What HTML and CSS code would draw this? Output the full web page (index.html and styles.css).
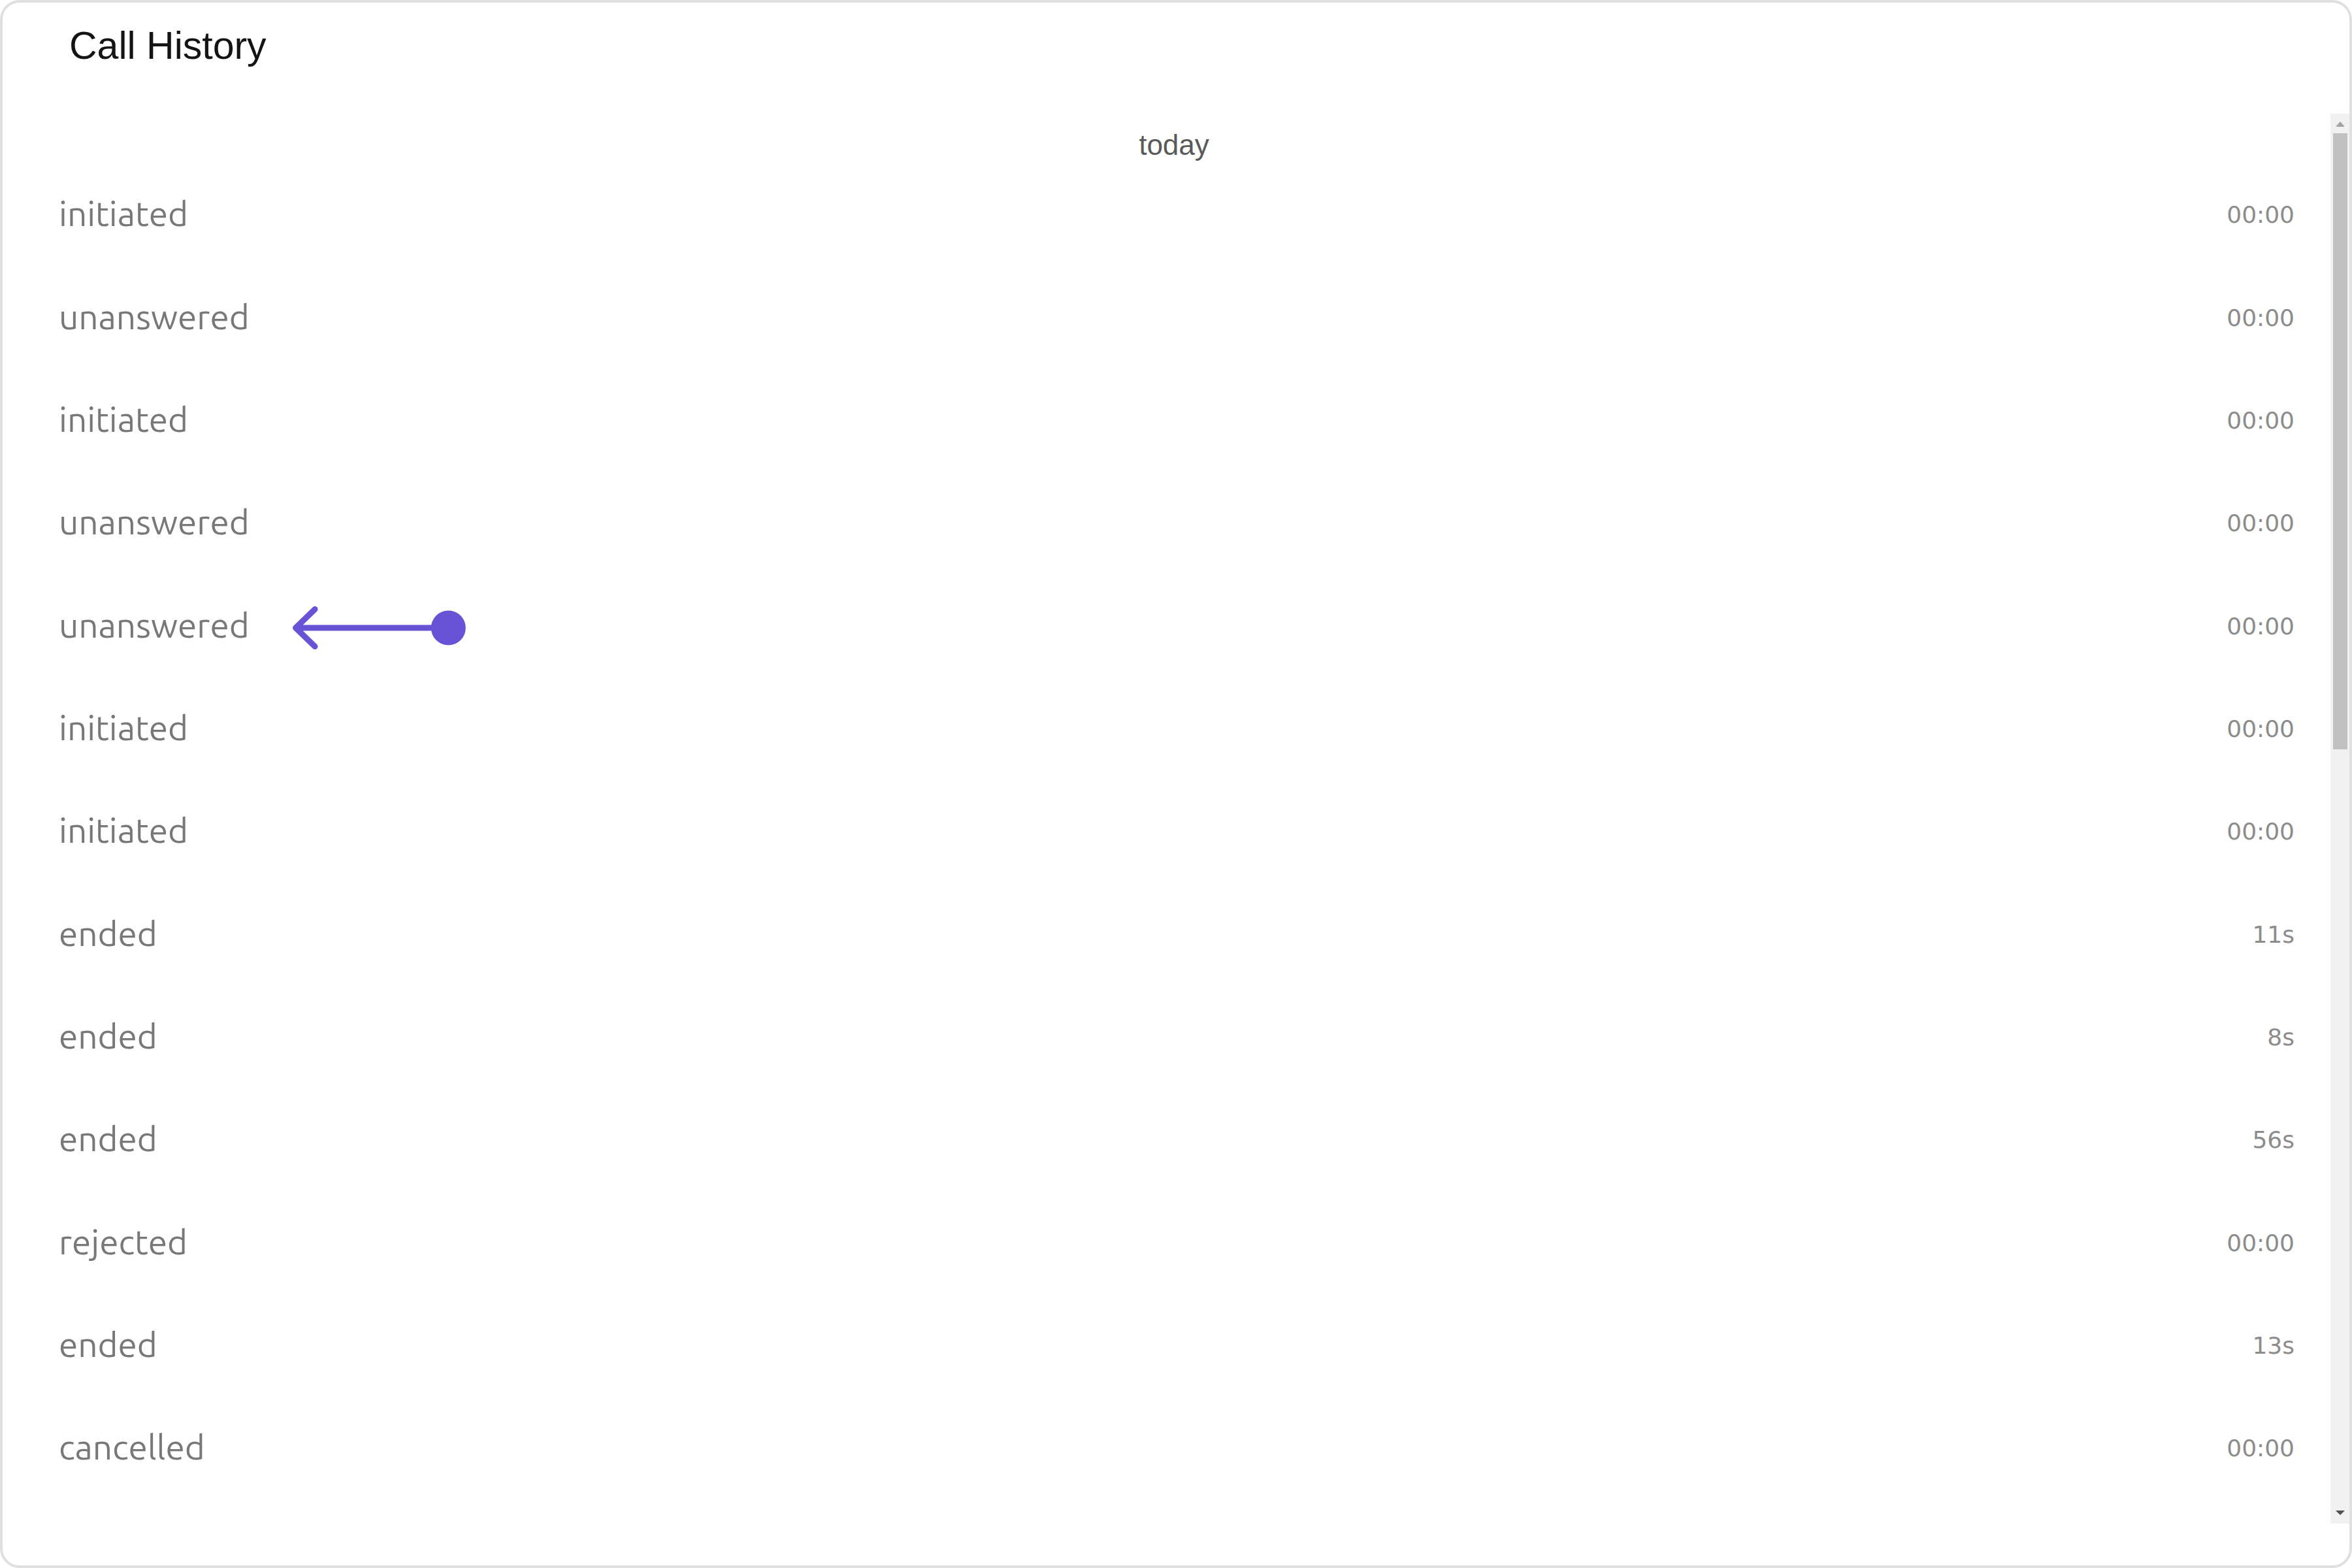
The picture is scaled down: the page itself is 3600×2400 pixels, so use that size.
FILE: index.html
```html
<!DOCTYPE html>
<html lang="en">
<head>
<meta charset="utf-8">
<title>Call History</title>
<link rel="stylesheet" href="styles.css">
</head>
<body>
<div class="card">
  <header class="card-header">
    <h1 class="title">Call History</h1>
  </header>
  <div class="card-body">
    <div class="list">
      <div class="date-sep">today</div>
      <div class="row"><span class="label">initiated</span><span class="time">00:00</span></div>
      <div class="row"><span class="label">unanswered</span><span class="time">00:00</span></div>
      <div class="row"><span class="label">initiated</span><span class="time">00:00</span></div>
      <div class="row"><span class="label">unanswered</span><span class="time">00:00</span></div>
      <div class="row"><span class="label">unanswered</span>
        <svg class="pointer" width="272" height="80" viewBox="0 0 272 80" aria-hidden="true">
          <path d="M38 11.5 L8.5 40 L38 68.5 M8.5 40 H240" fill="none" stroke="#6852D6" stroke-width="9" stroke-linecap="round" stroke-linejoin="round"/>
          <circle cx="242.3" cy="40" r="26.5" fill="#6852D6"/>
        </svg>
        <span class="time">00:00</span></div>
      <div class="row"><span class="label">initiated</span><span class="time">00:00</span></div>
      <div class="row"><span class="label">initiated</span><span class="time">00:00</span></div>
      <div class="row"><span class="label">ended</span><span class="time">11s</span></div>
      <div class="row"><span class="label">ended</span><span class="time">8s</span></div>
      <div class="row"><span class="label">ended</span><span class="time">56s</span></div>
      <div class="row"><span class="label">rejected</span><span class="time">00:00</span></div>
      <div class="row"><span class="label">ended</span><span class="time">13s</span></div>
      <div class="row"><span class="label">cancelled</span><span class="time">00:00</span></div>
    </div>
    <div class="scrollbar" aria-hidden="true">
      <div class="sb-btn sb-up"><span class="tri-up"></span></div>
      <div class="sb-track"><div class="sb-thumb"></div></div>
      <div class="sb-btn sb-down"><span class="tri-down"></span></div>
    </div>
  </div>
</div>
</body>
</html>
```

FILE: styles.css
```css
html, body {
  margin: 0;
  padding: 0;
  background: #ffffff;
}

.card {
  width: 3600px;
  height: 2400px;
  box-sizing: border-box;
  border: 4px solid #e0e0e0;
  border-radius: 30px;
  background: #ffffff;
  display: flex;
  flex-direction: column;
  padding-bottom: 64px;
  overflow: hidden;
}

.card-header {
  height: 170px;
  box-sizing: border-box;
  padding: 31px 0 0 102px;
  flex: none;
}

.title {
  margin: 0;
  font-family: "Liberation Sans", Arial, sans-serif;
  font-weight: 400;
  font-size: 59px;
  line-height: 70px;
  color: #141414;
}

.card-body {
  flex: 1;
  display: flex;
  min-height: 0;
}

.list {
  flex: 1;
  min-width: 0;
  overflow: hidden;
  padding: 0 55px 0 86px;
}

.date-sep {
  height: 75.33px;
  box-sizing: border-box;
  padding: 23px 8px 0 0;
  text-align: center;
  font-family: "Liberation Sans", Arial, sans-serif;
  font-size: 44px;
  line-height: 50px;
  color: #5a5a5a;
}

.row {
  position: relative;
  height: 157.33px;
  display: flex;
  align-items: center;
  justify-content: space-between;
}

.label {
  font-family: "Ubuntu", "Noto Sans", "Open Sans", sans-serif;
  font-size: 53px;
  color: #787878;
  margin-bottom: 2px;
}

.time {
  font-family: "DejaVu Sans", sans-serif;
  font-size: 36px;
  color: #8c8c8c;
  margin-top: 2px;
}

.pointer {
  position: absolute;
  left: 354px;
  top: 42px;
}

.scrollbar {
  width: 29px;
  flex: none;
  background: #f1f1f1;
  display: flex;
  flex-direction: column;
}

.sb-btn {
  height: 29px;
  flex: none;
  display: flex;
  justify-content: center;
  align-items: flex-start;
}

.tri-up {
  width: 0;
  height: 0;
  margin-top: 12px;
  margin-left: 1px;
  border-left: 7px solid transparent;
  border-right: 7px solid transparent;
  border-bottom: 8px solid #a3a3a3;
}

.tri-down {
  width: 0;
  height: 0;
  margin-top: 9px;
  margin-left: 1px;
  border-left: 7px solid transparent;
  border-right: 7px solid transparent;
  border-top: 7px solid #505050;
}

.sb-track {
  flex: 1;
  padding-top: 1px;
}

.sb-thumb {
  height: 943px;
  margin: 0 3px 0 4px;
  background: #c1c1c1;
}
```
